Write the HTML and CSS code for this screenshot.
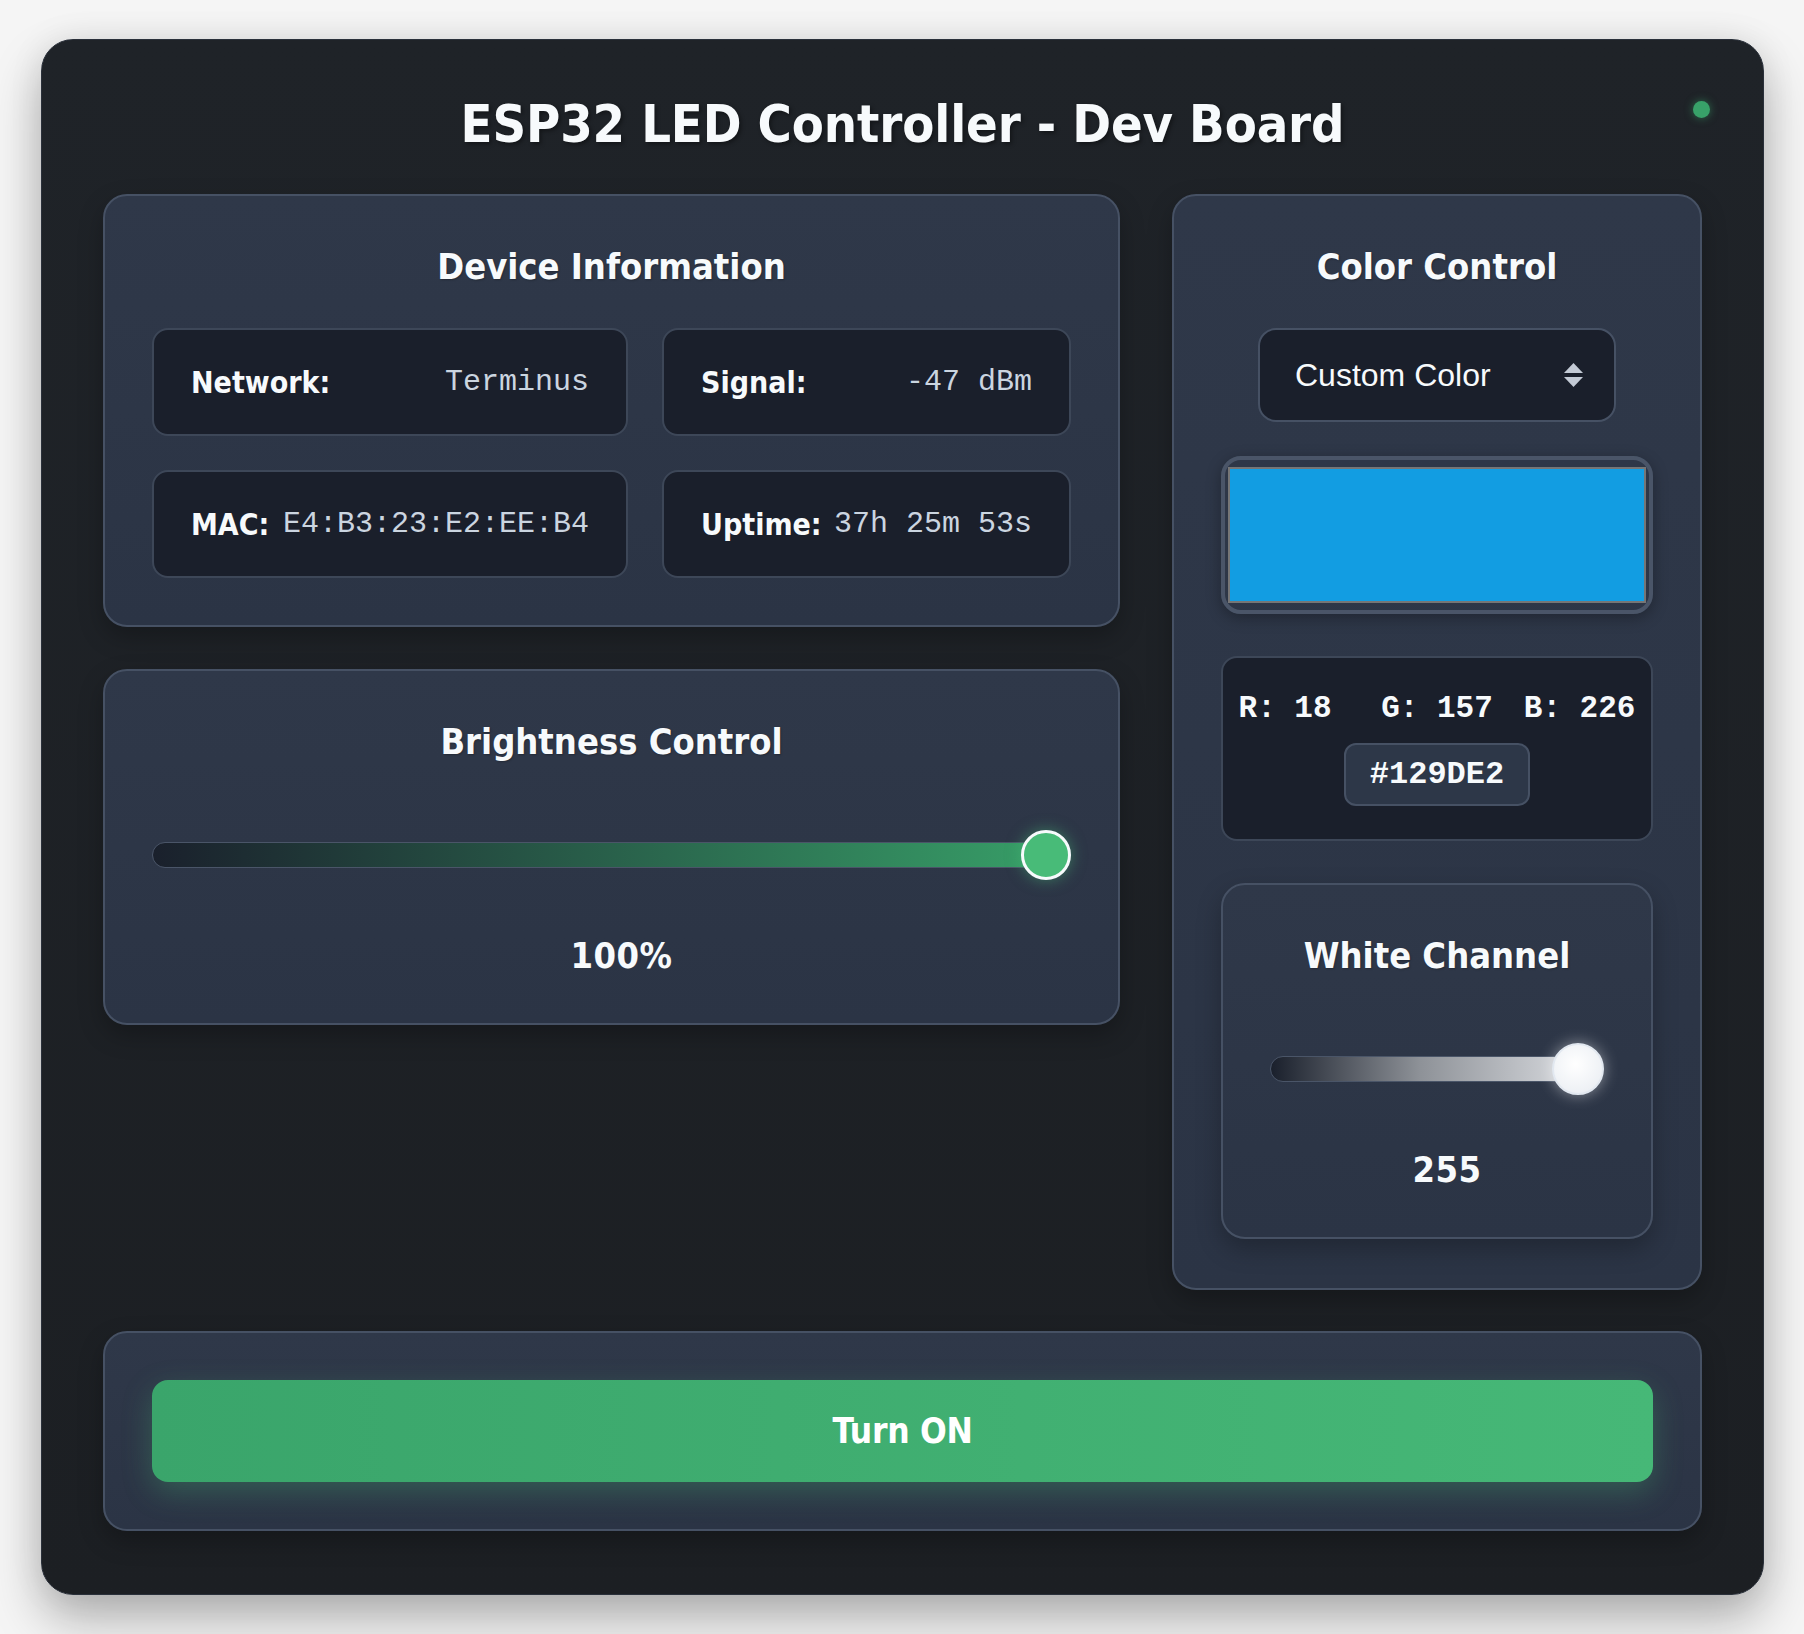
FILE: index.html
```html
<!DOCTYPE html>
<html lang="en">
<head>
<meta charset="utf-8">
<title>ESP32 LED Controller - Dev Board</title>
<link rel="stylesheet" href="styles.css">
</head>
<body>
<div class="card">
  <span class="status-dot"></span>
  <h1 class="title">ESP32 LED Controller - Dev Board</h1>
  <div class="main-grid">
    <div class="left-col">
      <section class="panel">
        <h2 class="panel-title">Device Information</h2>
        <div class="info-grid">
          <div class="info-item"><span class="info-label">Network:</span><span class="info-value">Terminus</span></div>
          <div class="info-item"><span class="info-label">Signal:</span><span class="info-value">-47 dBm</span></div>
          <div class="info-item"><span class="info-label">MAC:</span><span class="info-value">E4:B3:23:E2:EE:B4</span></div>
          <div class="info-item"><span class="info-label">Uptime:</span><span class="info-value">37h 25m 53s</span></div>
        </div>
      </section>
      <section class="panel">
        <h2 class="panel-title">Brightness Control</h2>
        <div class="slider">
          <div class="track track-green"></div>
          <div class="thumb thumb-green"></div>
        </div>
        <div class="slider-value">100%</div>
      </section>
    </div>
    <section class="panel color-panel">
      <h2 class="panel-title">Color Control</h2>
      <div class="select">
        <span class="select-text">Custom Color</span>
        <svg class="select-arrow" width="19" height="24" viewBox="0 0 19 24"><polygon points="0,10 9.5,0 19,10"/><polygon points="0,14 19,14 9.5,24"/></svg>
      </div>
      <div class="preview"><div class="swatch"></div></div>
      <div class="rgb-box">
        <div class="rgb-row">
          <span class="rgb-item">R: 18</span>
          <span class="rgb-item">G: 157</span>
          <span class="rgb-item">B: 226</span>
        </div>
        <div class="hex">#129DE2</div>
      </div>
      <section class="panel white-panel">
        <h2 class="panel-title">White Channel</h2>
        <div class="slider">
          <div class="track track-white"></div>
          <div class="thumb thumb-white"></div>
        </div>
        <div class="slider-value">255</div>
      </section>
    </section>
  </div>
  <section class="panel power-panel">
    <button class="power-btn" type="button">Turn ON</button>
  </section>
</div>
</body>
</html>
```
FILE: styles.css
```css
html {
  background: #f5f5f5;
}

body {
  margin: 0;
  padding: 39px 40px 42px 41px;
  background: #f5f5f5;
  font-family: "DejaVu Sans Condensed", "DejaVu Sans", sans-serif;
  font-stretch: condensed;
}

.card {
  position: relative;
  background: linear-gradient(180deg, #1f2328 0%, #1c1f23 100%);
  border: 1px solid #2a303a;
  border-radius: 32px;
  padding: 52px 61px 63px;
  box-shadow: 0 25px 50px rgba(0, 0, 0, 0.28), 0 0 35px rgba(0, 0, 0, 0.08);
}

.status-dot {
  position: absolute;
  top: 61px;
  right: 53px;
  width: 17px;
  height: 17px;
  border-radius: 50%;
  background: #38a169;
  box-shadow: 0 0 8px rgba(56, 161, 105, 0.6);
}

.title {
  margin: 0 0 38px;
  text-align: center;
  font-size: 52px;
  line-height: 64px;
  font-weight: 700;
  letter-spacing: -0.12px;
  color: #f7fafc;
  text-shadow: 2px 2px 4px rgba(0, 0, 0, 0.4);
}

.main-grid {
  display: grid;
  grid-template-columns: minmax(0, 1fr) 530px;
  column-gap: 52px;
  align-items: start;
}

.left-col {
  display: flex;
  flex-direction: column;
  gap: 42px;
  min-width: 0;
}

.panel {
  background: linear-gradient(180deg, #2f3849 0%, #2b3445 100%);
  border: 2px solid #465164;
  border-radius: 24px;
  padding: 47px;
  box-shadow: 0 10px 25px rgba(0, 0, 0, 0.25);
}

.color-panel {
  padding-bottom: 49px;
}

.panel-title {
  margin: 0 0 37px;
  text-align: center;
  font-size: 36px;
  line-height: 48px;
  font-weight: 700;
  color: #f7fafc;
  text-shadow: 1px 1px 2px rgba(0, 0, 0, 0.25);
}

.info-grid {
  display: grid;
  grid-template-columns: minmax(0, 476fr) minmax(0, 409fr);
  gap: 34px;
}

.info-item {
  display: flex;
  align-items: center;
  justify-content: space-between;
  gap: 12px;
  height: 108px;
  box-sizing: border-box;
  padding: 0 37px;
  background: #1a1f2b;
  border: 2px solid #3d4758;
  border-radius: 16px;
}

.info-label {
  font-size: 30px;
  font-weight: 700;
  color: #f7fafc;
  white-space: nowrap;
}

.info-value {
  font-family: "Liberation Mono", "Courier New", monospace;
  font-size: 30px;
  color: #cbd5e0;
  white-space: nowrap;
}

.slider {
  position: relative;
  display: flex;
  align-items: center;
  height: 52px;
  margin: 63px 0 55px;
}

.track {
  width: 100%;
  height: 26px;
  box-sizing: border-box;
  border: 1px solid #4a5568;
  border-radius: 13px;
}

.track-green {
  background: linear-gradient(90deg, #1a202c 0%, #38a169 100%);
}

.track-white {
  background: linear-gradient(90deg, #1a202c 0%, #8e9298 45%, #e4e6ea 100%);
}

.thumb {
  position: absolute;
  right: 0;
  top: 50%;
  transform: translateY(-50%);
  box-sizing: border-box;
  border-radius: 50%;
}

.thumb-green {
  width: 50px;
  height: 50px;
  background: #48bb78;
  border: 3px solid #f7fafc;
  box-shadow: 0 0 15px rgba(72, 187, 120, 0.5);
}

.thumb-white {
  width: 52px;
  height: 52px;
  background: radial-gradient(circle at 45% 40%, #ffffff 0%, #eef1f5 70%, #e2e8f0 100%);
  border: 2px solid #e2e8f0;
  box-shadow: 0 0 15px rgba(255, 255, 255, 0.45);
}

.slider-value {
  text-align: center;
  padding-left: 20px;
  font-size: 36px;
  line-height: 40px;
  font-weight: 700;
  letter-spacing: 0.5px;
  color: #f7fafc;
}

.select {
  display: flex;
  align-items: center;
  justify-content: space-between;
  width: 358px;
  height: 94px;
  box-sizing: border-box;
  margin: 0 auto;
  padding: 0 31px 0 35px;
  background: #1a1f2b;
  border: 2px solid #465164;
  border-radius: 18px;
  font-family: "Liberation Sans", Arial, sans-serif;
  font-stretch: normal;
  font-size: 32px;
  color: #f7fafc;
}

.select-arrow {
  fill: #c3cad5;
}

.preview {
  margin-top: 34px;
  padding: 7px 3px;
  border: 4px solid #4a5568;
  border-radius: 20px;
  box-shadow: 0 4px 15px rgba(0, 0, 0, 0.3);
}

.swatch {
  height: 136px;
  box-sizing: border-box;
  border: 2px solid #767676;
  background: #129de2;
}

.rgb-box {
  display: flex;
  flex-direction: column;
  align-items: center;
  margin-top: 42px;
  padding: 33px 0 33px;
  background: #1a1f2b;
  border: 2px solid #3d4758;
  border-radius: 16px;
}

.rgb-row {
  display: flex;
  justify-content: center;
  gap: 31px;
  font-family: "Liberation Mono", "Courier New", monospace;
  font-weight: 700;
  font-size: 31px;
  line-height: 35px;
  color: #f7fafc;
  white-space: pre;
}

.rgb-item {
  min-width: 6ch;
}

.hex {
  margin-top: 17px;
  padding: 12px 24px;
  font-family: "Liberation Mono", "Courier New", monospace;
  font-weight: 700;
  font-size: 32px;
  line-height: 35px;
  color: #f7fafc;
  background: #2d3748;
  border: 2px solid #465164;
  border-radius: 12px;
}

.white-panel {
  margin-top: 42px;
}

.power-panel {
  margin-top: 41px;
}

.power-btn {
  display: block;
  width: 100%;
  height: 102px;
  border: none;
  border-radius: 16px;
  background: linear-gradient(90deg, #3aa56b 0%, #46b877 100%);
  color: #ffffff;
  font-family: "DejaVu Sans Condensed", "DejaVu Sans", sans-serif;
  font-stretch: condensed;
  font-size: 35px;
  font-weight: 700;
  letter-spacing: -0.3px;
  box-shadow: 0 10px 30px rgba(72, 187, 120, 0.3);
  cursor: pointer;
}
```
